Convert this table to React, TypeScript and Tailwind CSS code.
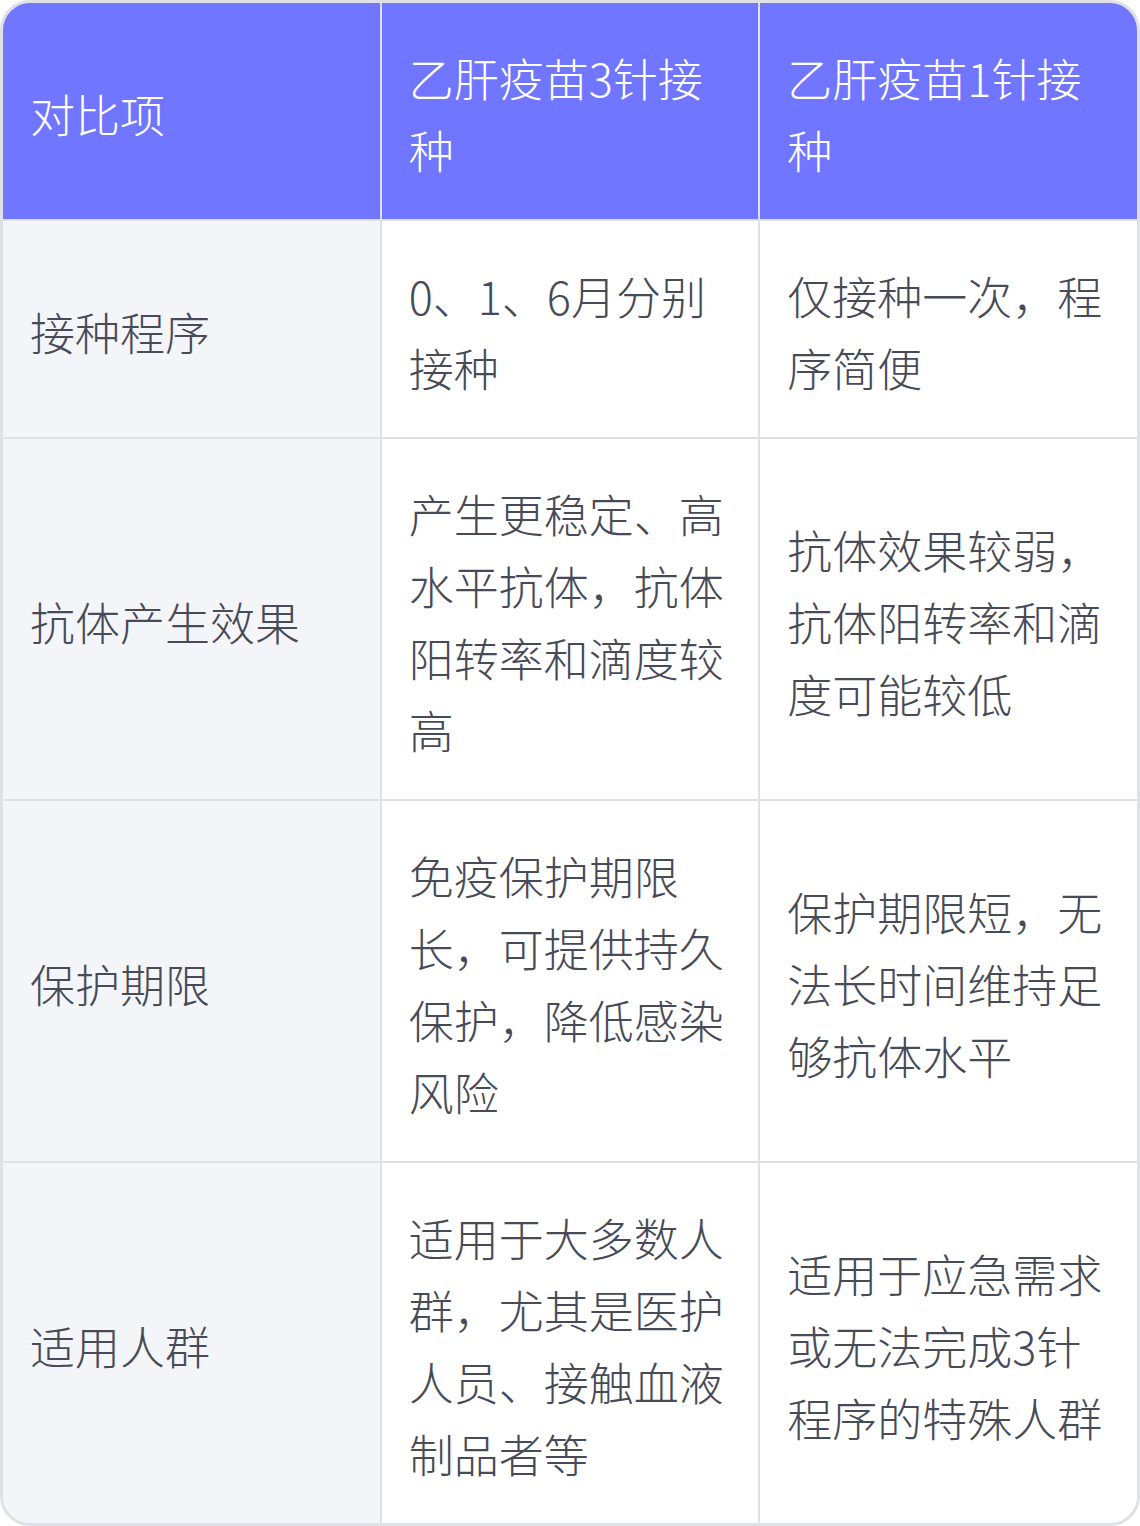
const headers = ["对比项", "乙肝疫苗3针接种", "乙肝疫苗1针接种"];

const rows = [
  ["接种程序", "0、1、6月分别接种", "仅接种一次，程序简便"],
  ["抗体产生效果", "产生更稳定、高水平抗体，抗体阳转率和滴度较高", "抗体效果较弱，抗体阳转率和滴度可能较低"],
  ["保护期限", "免疫保护期限长，可提供持久保护，降低感染风险", "保护期限短，无法长时间维持足够抗体水平"],
  ["适用人群", "适用于大多数人群，尤其是医护人员、接触血液制品者等", "适用于应急需求或无法完成3针程序的特殊人群"],
];

export default function App() {
  return (
    <div
      className="w-[1140px] h-[1526px] bg-white"
      style={{ fontFamily: '"Noto Sans CJK SC", "Noto Sans", sans-serif' }}
    >
      <div className="border-[3px] border-[#e0e1e7] rounded-[30px] overflow-hidden">
        <div className="grid grid-cols-3 gap-[2px] bg-[#e0e1e7]">
          {headers.map((h) => (
            <div
              key={h}
              className="bg-[#7076ff] text-white flex items-center px-[27px] pt-[39px] pb-[33px] text-[45px] leading-[72px] font-light"
            >
              {h}
            </div>
          ))}
          {rows.map((r) =>
            r.map((c, i) => (
              <div
                key={r[0] + i}
                className={
                  (i === 0 ? "bg-[#f4f5f9] " : "bg-white ") +
                  "text-[#474a57] flex items-center px-[27px] pt-[39px] pb-[33px] text-[45px] leading-[72px] font-light"
                }
              >
                {c}
              </div>
            ))
          )}
        </div>
      </div>
    </div>
  );
}
